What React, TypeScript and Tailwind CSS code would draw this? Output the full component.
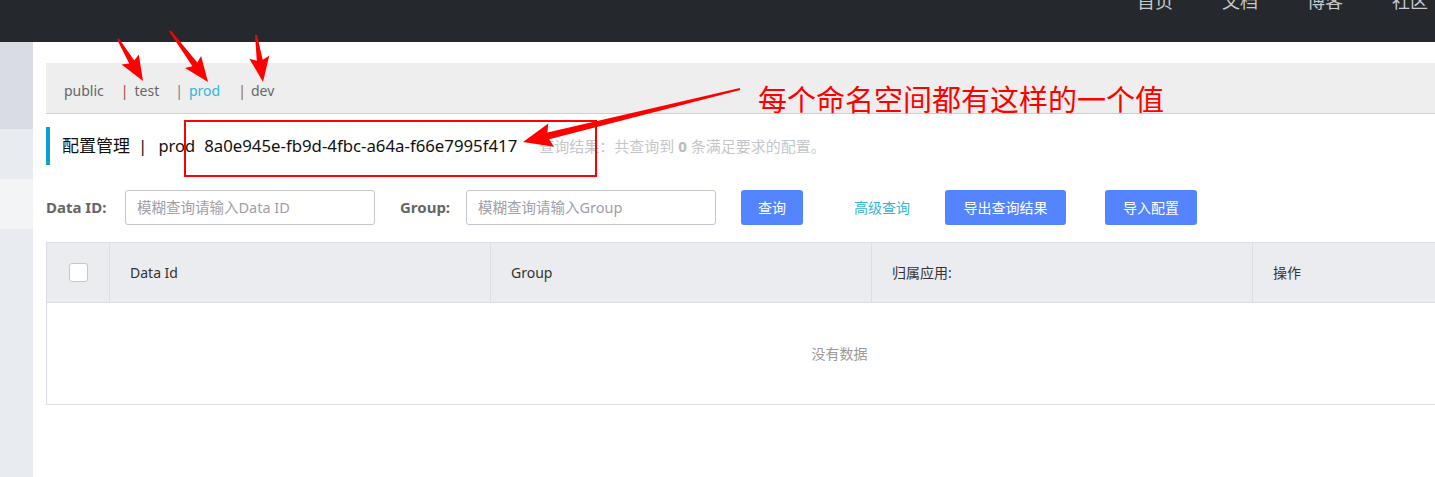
import React from "react";

type P = [number, number];

function arrowPoints(tail: P, tip: P, w0: number, w1: number, headLen: number, headW: number): string {
  const dx = tip[0] - tail[0];
  const dy = tip[1] - tail[1];
  const len = Math.hypot(dx, dy);
  const ux = dx / len;
  const uy = dy / len;
  const nx = -uy;
  const ny = ux;
  const bx = tip[0] - ux * headLen;
  const by = tip[1] - uy * headLen;
  const pts: P[] = [
    [tail[0] + nx * w0 / 2, tail[1] + ny * w0 / 2],
    [bx + nx * w1 / 2, by + ny * w1 / 2],
    [bx + nx * headW / 2 - ux * 3, by + ny * headW / 2 - uy * 3],
    [tip[0], tip[1]],
    [bx - nx * headW / 2 - ux * 3, by - ny * headW / 2 - uy * 3],
    [bx - nx * w1 / 2, by - ny * w1 / 2],
    [tail[0] - nx * w0 / 2, tail[1] - ny * w0 / 2],
  ];
  return pts.map((p) => `${p[0].toFixed(1)},${p[1].toFixed(1)}`).join(" ");
}

const font = { fontFamily: '"Noto Sans", "Noto Sans CJK SC", sans-serif' };

export default function App() {
  return (
    <div
      className="relative w-[1435px] h-[477px] overflow-hidden bg-white text-[#333]"
      style={font}
    >
      {/* top bar */}
      <div className="h-[42px] bg-[#25292e] flex justify-end items-start pr-[7px] overflow-hidden">
        <div className="flex gap-[49px] -mt-[12px] text-[18px] leading-[26px] text-[#c8cacc]">
          <span>首页</span>
          <span>文档</span>
          <span>博客</span>
          <span>社区</span>
        </div>
      </div>

      <div className="flex h-[435px]">
        {/* sidebar */}
        <div className="w-[33px] shrink-0 flex flex-col">
          <div className="h-[87px] bg-[#d9dde3]" />
          <div className="h-[50px] bg-[#e8ebef]" />
          <div className="h-[50px] bg-[#f3f4f6]" />
          <div className="flex-1 bg-[#e8ebef]" />
        </div>

        {/* main */}
        <div className="flex-1 pl-[13px] pt-[21px] min-w-0">
          {/* namespace bar */}
          <div className="h-[51px] bg-[#eeeeee] border-b border-[#cfcfcf] flex items-center pl-[18px] text-[14px] pt-[4px]">
            <span className="text-[#666]">public</span>
            <span className="ml-[17px] text-[#9a4a3a]">|</span>
            <span className="ml-[6px] text-[#666]">test</span>
            <span className="ml-[16px] text-[#6a7d95]">|</span>
            <span className="ml-[6px] text-[#33b6d9]">prod</span>
            <span className="ml-[18px] text-[#a0612e]">|</span>
            <span className="ml-[5px] text-[#666]">dev</span>
          </div>

          {/* title */}
          <div className="mt-[13px] h-[38px] flex items-center border-l-4 border-[#0ba0d4] pl-[12px]">
            <span className="text-[17px] text-[#111]">配置管理</span>
            <span className="text-[17px] text-[#111] ml-[8px]">|</span>
            <span className="text-[16.5px] text-[#111] ml-[11px]">prod</span>
            <span className="text-[16.8px] text-[#111] ml-[9px]">8a0e945e-fb9d-4fbc-a64a-f66e7995f417</span>
            <span className="text-[15px] text-[#c4c6cc] ml-[22px]">
              查询结果：共查询到 <b className="font-bold text-[#b8bac0]">0</b> 条满足要求的配置。
            </span>
          </div>

          {/* search row */}
          <div className="mt-[25px] h-[35px] flex items-center text-[14px]">
            <span className="font-bold text-[15px] text-[#666] w-[79px]">Data ID:</span>
            <div className="w-[250px] h-[35px] border border-[#c4c6cf] rounded-[3px] flex items-center pl-[11px] text-[14.5px] text-[#a0a0a8]">
              模糊查询请输入Data ID
            </div>
            <span className="font-bold text-[15px] text-[#666] ml-[25px] w-[66px]">Group:</span>
            <div className="w-[250px] h-[35px] border border-[#c4c6cf] rounded-[3px] flex items-center pl-[11px] text-[14.5px] text-[#a0a0a8]">
              模糊查询请输入Group
            </div>
            <div className="ml-[25px] w-[62px] h-[35px] rounded-[3px] bg-[#5584ff] text-white flex items-center justify-center">
              查询
            </div>
            <span className="ml-[51px] w-[59px] text-[#33b6d9]">高级查询</span>
            <div className="ml-[32px] w-[121px] h-[35px] rounded-[3px] bg-[#5584ff] text-white flex items-center justify-center">
              导出查询结果
            </div>
            <div className="ml-[39px] w-[92px] h-[35px] rounded-[3px] bg-[#5584ff] text-white flex items-center justify-center">
              导入配置
            </div>
          </div>

          {/* table */}
          <div className="mt-[17px] w-[1587px] border border-[#dcdee3] text-[14px]">
            <div className="h-[60px] bg-[#ebecf0] flex border-b border-[#dcdee3]">
              <div className="w-[63px] shrink-0 flex items-center justify-center border-r border-[#dcdee3]">
                <div className="w-[19px] h-[19px] bg-white border border-[#c4c6cf] rounded-[3px]" />
              </div>
              <div className="w-[381px] shrink-0 flex items-center pl-[20px] border-r border-[#dcdee3] text-[#333]">
                Data Id
              </div>
              <div className="w-[381px] shrink-0 flex items-center pl-[20px] border-r border-[#dcdee3] text-[#333]">
                Group
              </div>
              <div className="w-[381px] shrink-0 flex items-center pl-[20px] border-r border-[#dcdee3] text-[#333]">
                归属应用:
              </div>
              <div className="flex-1 flex items-center pl-[20px] text-[#333]">操作</div>
            </div>
            <div className="h-[101px] flex items-center justify-center text-[#999]">没有数据</div>
          </div>
        </div>
      </div>

      {/* annotation overlay */}
      <div className="absolute left-[184px] top-[120px] w-[413px] h-[57px] border-2 border-[#ff0000] pointer-events-none" />
      <div className="absolute left-[758px] top-[80px] text-[29px] leading-[40px] text-[#ff0000] pointer-events-none">
        每个命名空间都有这样的一个值
      </div>
      <svg className="absolute left-0 top-0 pointer-events-none" width="1435" height="477">
        <polygon fill="#ff0000" points={arrowPoints([118, 39], [143, 81], 2, 6, 22, 20)} />
        <polygon fill="#ff0000" points={arrowPoints([170, 31], [208, 82], 2, 6, 22, 20)} />
        <polygon fill="#ff0000" points={arrowPoints([256, 35], [263, 82], 2, 6, 22, 20)} />
        <polygon fill="#ff0000" points={arrowPoints([740, 89], [523, 142], 2, 7, 26, 24)} />
      </svg>
    </div>
  );
}
